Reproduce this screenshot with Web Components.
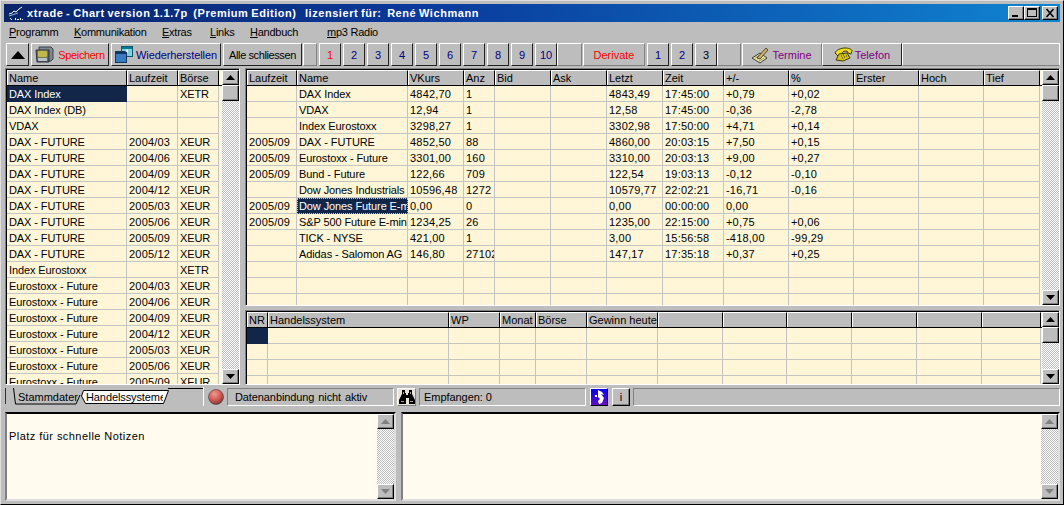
<!DOCTYPE html>
<html>
<head>
<meta charset="utf-8">
<title>xtrade</title>
<style>
  html, body { margin: 0; padding: 0; background: #bdbdbd; overflow: hidden; }
  body { font: 11px "Liberation Sans", Arial, sans-serif; color: #000; }
</style>
</head>
<body>
<xt-window>
  <xt-titlebar slot="title">xtrade - Chart version 1.1.7p  (Premium Edition)   lizensiert für:  René Wichmann</xt-titlebar>
  <xt-menubar slot="menu"></xt-menubar>
  <xt-toolbar slot="tools"></xt-toolbar>
  <xt-grid slot="left" id="stamm" cols="120,51,41"></xt-grid>
  <xt-grid slot="top" id="kurse" cols="50,111,56,31,56,56,56,61,65,65,65,65,56"></xt-grid>
  <xt-grid slot="bottom" id="systeme" cols="21,181,51,36,51,71,65,64,65,65,65,59"></xt-grid>
  <xt-statusbar slot="status"></xt-statusbar>
  <xt-notes slot="noteleft">Platz für schnelle Notizen</xt-notes>
  <xt-notes slot="noteright"></xt-notes>
</xt-window>

<script>
const raised = `
  background: #bdbdbd;
  border: 1px solid;
  border-color: #fff #000 #000 #fff;
  box-sizing: border-box;
`;

class XtWindow extends HTMLElement {
  constructor() {
    super();
    this.attachShadow({ mode: 'open' }).innerHTML = `
      <style>
        :host {
          display: flex;
          flex-direction: column;
          width: 1064px;
          height: 505px;
          box-sizing: border-box;
          padding: 3px 3px 0 3px;
          background: #bdbdbd;
          border-top: 1px solid #dfdfdf;
          border-left: 1px solid #dfdfdf;
          border-right: 1px solid #000;
          border-bottom: 1px solid #000;
        }
        .main { display: flex; gap: 5px; height: 317px; margin-top: 2px; margin-left: 1px; }
        .right { display: flex; flex-direction: column; gap: 4px; flex: 1; min-width: 0; }
        .leftcol { width: 235px; flex: none; }
        .notes { display: flex; gap: 5px; height: 89px; margin-top: 6px; margin-left: 1px; }
        .notes ::slotted([slot=noteleft]) { width: 391px; flex: none; }
        .notes ::slotted([slot=noteright]) { flex: 1; }
        ::slotted([slot=top]) { height: 238px; flex: none; }
        ::slotted([slot=bottom]) { height: 75px; flex: none; }
        ::slotted([slot=left]) { height: 317px; }
      </style>
      <slot name="title"></slot>
      <slot name="menu"></slot>
      <slot name="tools"></slot>
      <div class="main">
        <div class="leftcol"><slot name="left"></slot></div>
        <div class="right"><slot name="top"></slot><slot name="bottom"></slot></div>
      </div>
      <slot name="status"></slot>
      <div class="notes"><slot name="noteleft"></slot><slot name="noteright"></slot></div>
    `;
  }
}

class XtTitlebar extends HTMLElement {
  constructor() {
    super();
    this.attachShadow({ mode: 'open' }).innerHTML = `
      <style>
        :host {
          display: flex;
          align-items: center;
          height: 18px;
          padding: 0 2px 0 4px;
          background: linear-gradient(90deg, #0a246a 0%, #0a3a9c 40%, #1084d0 100%);
          color: #fff;
          font: bold 11px "Liberation Sans", Arial, sans-serif;
          letter-spacing: 0.55px;
          word-spacing: -0.8px;
          white-space: pre;
        }
        svg.logo { flex: none; margin-right: 3px; }
        .t { flex: 1; }
        .btns { display: flex; }
        button {
          ${raised}
          width: 16px; height: 14px; padding: 0; display: block;
          box-shadow: inset -1px -1px 0 #808080;
        }
        button svg { display: block; }
        button.close { margin-left: 2px; }
      </style>
      <svg class="logo" width="16" height="16" viewBox="0 0 16 16">
        <polyline points="1,9 4,8 6,6 8,7 11,4 14,2" fill="none" stroke="#fff" stroke-width="1"/>
        <polyline points="1,11 4,10 7,9 10,8" fill="none" stroke="#9fb4e0" stroke-width="1"/>
        <path d="M2 13h1v1h1v1H3v-1H2zM7 13h1v2H7zM9 14h2v1H9zM12 13h1v2h-1zM14 14h1v1h-1z" fill="#fff"/>
      </svg>
      <span class="t"><slot></slot></span>
      <span class="btns">
        <button><svg width="14" height="12"><rect x="3" y="8" width="6" height="2" fill="#000"/></svg></button>
        <button><svg width="14" height="12"><rect x="2.5" y="1.5" width="9" height="8" fill="none" stroke="#000"/><rect x="2" y="1" width="10" height="2" fill="#000"/></svg></button>
        <button class="close"><svg width="14" height="12"><path d="M3.5 2l7 8M10.5 2l-7 8" stroke="#000" stroke-width="1.6" fill="none"/></svg></button>
      </span>
    `;
  }
}

class XtMenubar extends HTMLElement {
  constructor() {
    super();
    const items = [['P', 'rogramm', 5, 48], ['K', 'ommunikation', 17, 71], ['E', 'xtras', 17, 33], ['L', 'inks', 15, 25], ['H', 'andbuch', 15, 48], ['m', 'p3 Radio', 29, 52]];
    this.attachShadow({ mode: 'open' }).innerHTML = `
      <style>
        :host {
          display: flex;
          align-items: center;
          height: 21px;
          box-sizing: border-box;
          padding-bottom: 1px;
          font: 11px "Liberation Sans", Arial, sans-serif;
          letter-spacing: -0.25px;
        }
        span { white-space: pre; flex: none; }
        u { text-underline-offset: 1px; }
      </style>
      ${items.map(i => `<span style="margin-left:${i[2]}px;width:${i[3]}px"><u>${i[0]}</u>${i[1]}</span>`).join('')}
    `;
  }
}

class XtButton extends HTMLElement {
  constructor() {
    super();
    this.attachShadow({ mode: 'open' }).innerHTML = `
      <style>
        :host {
          ${raised}
          display: flex;
          align-items: center;
          justify-content: center;
          gap: 3px;
          height: 23px;
          white-space: nowrap;
          flex: none;
          font: 11px "Liberation Sans", Arial, sans-serif;
          border-color: #fff #222 #222 #fff;
        }
        :host([flat]) { border-color: #fff #808080 #808080 #fff; }
      </style>
      <slot name="icon"></slot><slot></slot>
    `;
  }
}

class XtToolbar extends HTMLElement {
  constructor() {
    super();
    const nums = ['1','2','3','4','5','6','7','8','9','10'];
    this.attachShadow({ mode: 'open' }).innerHTML = `
      <style>
        :host {
          display: flex;
          gap: 2px;
          height: 23px;
          margin-left: 1px;
        }
        xt-button svg { display: block; }
      </style>
      <xt-button style="width:23px;margin-left:1px">
        <svg slot="icon" width="14" height="8"><path d="M0 8L7 0l7 8z" fill="#000"/></svg>
      </xt-button>
      <xt-button style="width:78px;color:#ff0000;gap:4px;letter-spacing:-0.35px">
        <svg slot="icon" width="19" height="17" viewBox="0 0 19 17">
          <path d="M4 1h12l2 2v10l-2 2H5z" fill="#7d8791" stroke="#3b4248"/>
          <path d="M1 4h13v12H2z" fill="#59656f" stroke="#2b3036"/>
          <rect x="3" y="5" width="9" height="6" fill="#f6ec6c" stroke="#8a8430"/>
          <path d="M4 7h7M4 9h7" stroke="#8a8430"/>
          <rect x="3" y="12" width="9" height="3" fill="#b9c1c9"/>
        </svg>Speichern</xt-button>
      <xt-button style="width:110px;color:#000080;gap:3px;letter-spacing:-0.1px">
        <svg slot="icon" width="18" height="17" viewBox="0 0 18 17">
          <rect x="6.5" y="0.5" width="11" height="10" fill="#7fd0dc" stroke="#0a5a74"/>
          <rect x="7" y="1" width="10" height="2" fill="#0a7a94"/>
          <rect x="0.5" y="5.5" width="11" height="11" fill="#3a7cc4" stroke="#12365e"/>
          <rect x="1" y="6" width="10" height="2" fill="#12365e"/>
          <path d="M10 5l3-2v4z" fill="#eee"/>
        </svg>Wiederherstellen</xt-button>
      <xt-button style="width:79px;letter-spacing:-0.4px">Alle schliessen</xt-button>
      <xt-button flat style="width:14px;margin-left:-1px"></xt-button>
      ${nums.map((n, i) => `<xt-button style="width:22px;color:${i ? '#000080' : '#ff0000'}">${n}</xt-button>`).join('')}
      <xt-button flat style="width:25px;margin-left:-2px"></xt-button>
      <xt-button style="width:62px;margin-left:-1px;color:#ff0000;border-color:#fff #808080 #808080 #fff">Derivate</xt-button>
      <xt-button style="width:22px;color:#000080">1</xt-button>
      <xt-button style="width:22px;color:#000080">2</xt-button>
      <xt-button style="width:22px">3</xt-button>
      <xt-button flat style="width:24px;margin-left:-2px"></xt-button>
      <xt-button flat style="width:80px;margin-left:-1px;color:#800080;gap:3px">
        <svg slot="icon" width="17" height="18" viewBox="0 0 17 18">
          <path d="M0 12l8-5 7 5-7 5z" fill="#eee6b0" stroke="#3a3a30"/>
          <path d="M3 12l5-3M5 13l5-3M7 15l5-3" stroke="#8a8a60"/>
          <path d="M5 12L14 2l2 2-8 9z" fill="#c8b070" stroke="#5a4a2a"/>
        </svg>Termine</xt-button>
      <xt-button style="width:80px;margin-left:-2px;color:#800080;gap:2px">
        <svg slot="icon" width="19" height="15" viewBox="0 0 19 15">
          <path d="M1 6c1-3 6-5 10-5 3 0 7 1 7 3l-1 3-3-1-1-2c-2 0-4 0-5 2l1 1-4 3z" fill="#f2e020" stroke="#3f3a00"/>
          <path d="M2 13l3-6 8-1 3 5-7 3z" fill="#d8c410" stroke="#3f3a00"/>
          <path d="M7 9h1M9 8h1M8 11h1M10 10h1M12 9h1" stroke="#222"/>
        </svg>Telefon</xt-button>
      <xt-button flat style="flex:1;margin-left:-2px;border-right-color:#fff"></xt-button>
    `;
  }
}

class XtScroll extends HTMLElement {
  constructor() {
    super();
    this.attachShadow({ mode: 'open' }).innerHTML = `
      <style>
        :host {
          display: flex;
          flex-direction: column;
          width: 17px;
          flex: none;
          background: repeating-conic-gradient(#bdbdbd 0 25%, #fff 0 50%) 0 0 / 2px 2px;
          --arrow: #000;
        }
        :host([off]) { --arrow: #808080; }
        .b {
          ${raised}
          height: 15px;
          flex: none;
          display: flex;
          align-items: center;
          justify-content: center;
          box-shadow: inset -1px -1px 0 #808080;
        }
        .thumb { height: 16px; }
        .sp { flex: 1; }
        svg { display: block; fill: var(--arrow); }
      </style>
      <div class="b"><svg width="9" height="5"><path d="M0 5L4.5 0 9 5z"/></svg></div>
      <div class="b thumb"></div>
      <div class="sp"></div>
      <div class="b"><svg width="9" height="5"><path d="M0 0l4.5 5L9 0z"/></svg></div>
    `;
    this.thumb = this.shadowRoot.querySelector('.thumb');
  }
  connectedCallback() {
    if (this.hasAttribute('off') && this.thumb) this.thumb.remove();
  }
}

class XtGrid extends HTMLElement {
  constructor() {
    super();
    this.attachShadow({ mode: 'open' }).innerHTML = `
      <style>
        :host {
          display: flex;
          box-sizing: border-box;
          padding: 1px;
          border: 1px solid;
          border-color: #808080 #fff #fff #808080;
          font: 11px "Liberation Sans", Arial, sans-serif;
          letter-spacing: -0.1px;
          background: #000;
          overflow: hidden;
        }
        .inner { display: flex; flex: 1; min-width: 0; background: #fff6d8; overflow: hidden; margin: 0 -1px -1px 0; }
        .table { flex: 1; min-width: 0; overflow: hidden; }
        .row { display: grid; height: 16px; }
        .cell {
          box-sizing: border-box;
          height: 16px;
          line-height: 17px;
          padding-left: 2px;
          border-right: 1px solid #c4c4c4;
          border-bottom: 1px solid #c4c4c4;
          white-space: pre;
          overflow: hidden;
        }
        .cell.num { letter-spacing: 0.2px; }
        .head { height: 15px; border-bottom: 1px solid #000; box-sizing: content-box; }
        .head .cell {
          background: #bdbdbd;
          height: 15px;
          line-height: 14px;
          border-color: #000;
          border-bottom: 0;
          border-top: 1px solid #fff;
          border-left: 1px solid #fff;
          padding-left: 1px;
          letter-spacing: 0;
        }
        .cell.sel { background: #12264a; color: #fff; border-color: #12264a; }
        .cell.focus { outline: 1px dotted #d8c890; outline-offset: -1px; }
      </style>
      <div class="inner"><div class="table"></div><xt-scroll></xt-scroll></div>
    `;
  }
  set data({ head, rows, sel, focus }) {
    const cols = this.getAttribute('cols').split(',').map(c => c + 'px').join(' ');
    const mk = (r, y) => `<div class="row" style="grid-template-columns:${cols}">` + r.map((c, x) => {
      const on = sel && sel[0] === y && sel[1] === x;
      const num = /^[\d+\-]/.test(c) ? ' num' : '';
      return `<div class="cell${num}${on ? ' sel' : ''}${on && focus ? ' focus' : ''}">${c}</div>`;
    }).join('') + '</div>';
    this.shadowRoot.querySelector('.table').innerHTML =
      mk(head, -1).replace('class="row"', 'class="row head"') + rows.map(mk).join('');
  }
}

class XtStatusbar extends HTMLElement {
  constructor() {
    super();
    this.attachShadow({ mode: 'open' }).innerHTML = `
      <style>
        :host {
          display: flex;
          align-items: stretch;
          height: 19px;
          margin-top: 2px;
          margin-left: 1px;
          font: 11px "Liberation Sans", Arial, sans-serif;
        }
        .tabs { position: relative; width: 198px; height: 19px; flex: none; border-right: 1px solid #fff; }
        .tabs svg { display: block; }
        .tabs span { position: absolute; top: 3px; line-height: 15px; white-space: pre; overflow: hidden; }
        .ball { width: 16px; flex: none; margin-left: 4px; display: flex; align-items: center; justify-content: center; }
        .panel {
          box-sizing: border-box;
          border: 1px solid;
          border-color: #808080 #fff #fff #808080;
          padding-left: 7px;
          line-height: 16px;
          margin-top: 1px;
          flex: none;
          white-space: pre;
        }
        .sq { box-sizing: border-box; width: 18px; flex: none; display: flex; align-items: center; justify-content: center; border: 1px solid; margin-top: 1px; }
      </style>
      <div class="tabs">
        <svg width="198" height="19">
          <path d="M0.5 1V17" stroke="#333" fill="none"/>
          <path d="M8.5 1L10.5 17H71L75 8" stroke="#000" fill="none"/>
          <path d="M78.5 3.5H163.5L158.5 16.5H80.5L76.5 9z" fill="#fdfdfd" stroke="#000"/>
          <path d="M163 1.5H198" stroke="#000" fill="none"/>
        </svg>
        <span style="left:13px;width:60px">Stammdater</span>
        <span style="left:81px;width:77px;letter-spacing:-.1px">Handelssysteme</span>
      </div>
      <div class="ball">
        <svg width="16" height="16" viewBox="0 0 16 16">
          <defs><radialGradient id="b" cx=".4" cy=".3" r=".8"><stop offset="0" stop-color="#f09a90"/><stop offset=".55" stop-color="#d0544e"/><stop offset="1" stop-color="#5a3030"/></radialGradient></defs>
          <circle cx="8" cy="8" r="7.5" fill="url(#b)" stroke="#4a4040" stroke-width=".6"/>
        </svg>
      </div>
      <div class="panel" style="width:167px;margin-left:3px;letter-spacing:-.1px;word-spacing:1px">Datenanbindung nicht aktiv</div>
      <div class="sq" style="width:19px;margin-left:3px;background:#e8e4dc;border-color:#fff #808080 #808080 #fff">
        <svg width="16" height="15" viewBox="0 0 16 15">
          <path d="M3 0h3v3h1v2h2V3h1V0h3v4l3 6v4h-6V8H7v6H0v-4l3-6z" fill="#000"/>
          <path d="M2 11h3v1H2zM11 11h3v1h-3zM4 2h1v2H4zM11 2h1v2h-1z" fill="#a8a49c"/>
        </svg>
      </div>
      <div class="panel" style="width:167px;margin-left:3px;padding-left:4px;letter-spacing:-.05px">Empfangen: 0</div>
      <div class="sq" style="margin-left:4px;background:linear-gradient(170deg,#0000f0,#6a10c0);border-color:#fff #000 #000 #fff">
        <svg width="16" height="16" viewBox="0 0 16 16">
          <path d="M7 1l4 2 2 3-3-1 3 4-2 5-3 1-1-3 2-2-2-2z" fill="#fff"/>
          <path d="M4 6h2v2H4z" fill="#fff"/>
        </svg>
      </div>
      <div class="sq" style="${raised};margin-top:1px;margin-left:4px;box-shadow:inset -1px -1px 0 #808080;line-height:15px">i</div>
      <div class="panel" style="flex:1;margin-left:3px"></div>
    `;
  }
}

class XtNotes extends HTMLElement {
  constructor() {
    super();
    this.attachShadow({ mode: 'open' }).innerHTML = `
      <style>
        :host {
          display: flex;
          box-sizing: border-box;
          border: 2px solid;
          border-color: #000 #dfdfdf #dfdfdf #808080;
          background: #fffbef;
          font: 11px "Liberation Sans", Arial, sans-serif;
          letter-spacing: 0.45px;
          min-width: 0;
        }
        .txt { flex: 1; padding: 15px 0 0 2px; line-height: 15px; }
      </style>
      <div class="txt"><slot></slot></div>
      <xt-scroll off></xt-scroll>
    `;
  }
}

customElements.define('xt-window', XtWindow);
customElements.define('xt-titlebar', XtTitlebar);
customElements.define('xt-menubar', XtMenubar);
customElements.define('xt-button', XtButton);
customElements.define('xt-toolbar', XtToolbar);
customElements.define('xt-scroll', XtScroll);
customElements.define('xt-grid', XtGrid);
customElements.define('xt-statusbar', XtStatusbar);
customElements.define('xt-notes', XtNotes);

// grid contents
const F = 'DAX - FUTURE', E = 'Eurostoxx - Future';
document.getElementById('stamm').data = {
  head: ['Name', 'Laufzeit', 'Börse'],
  sel: [0, 0],
  rows: [
    ['DAX Index', '', 'XETR'], ['DAX Index (DB)', '', ''], ['VDAX', '', ''],
    [F, '2004/03', 'XEUR'], [F, '2004/06', 'XEUR'], [F, '2004/09', 'XEUR'], [F, '2004/12', 'XEUR'],
    [F, '2005/03', 'XEUR'], [F, '2005/06', 'XEUR'], [F, '2005/09', 'XEUR'], [F, '2005/12', 'XEUR'],
    ['Index Eurostoxx', '', 'XETR'],
    [E, '2004/03', 'XEUR'], [E, '2004/06', 'XEUR'], [E, '2004/09', 'XEUR'], [E, '2004/12', 'XEUR'],
    [E, '2005/03', 'XEUR'], [E, '2005/06', 'XEUR'], [E, '2005/09', 'XEUR']
  ]
};
const row = (l, n, v, a, le, z, d, p) => [l, n, v, a, '', '', le, z, d, p, '', '', ''];
const blank = n => Array(n).fill('');
document.getElementById('kurse').data = {
  head: ['Laufzeit', 'Name', 'VKurs', 'Anz', 'Bid', 'Ask', 'Letzt', 'Zeit', '+/-', '%', 'Erster', 'Hoch', 'Tief'],
  sel: [7, 1],
  focus: true,
  rows: [
    row('', 'DAX Index', '4842,70', '1', '4843,49', '17:45:00', '+0,79', '+0,02'),
    row('', 'VDAX', '12,94', '1', '12,58', '17:45:00', '-0,36', '-2,78'),
    row('', 'Index Eurostoxx', '3298,27', '1', '3302,98', '17:50:00', '+4,71', '+0,14'),
    row('2005/09', 'DAX - FUTURE', '4852,50', '88', '4860,00', '20:03:15', '+7,50', '+0,15'),
    row('2005/09', 'Eurostoxx - Future', '3301,00', '160', '3310,00', '20:03:13', '+9,00', '+0,27'),
    row('2005/09', 'Bund - Future', '122,66', '709', '122,54', '19:03:13', '-0,12', '-0,10'),
    row('', 'Dow Jones Industrials', '10596,48', '1272', '10579,77', '22:02:21', '-16,71', '-0,16'),
    row('2005/09', 'Dow Jones Future E-m', '0,00', '0', '0,00', '00:00:00', '0,00', ''),
    row('2005/09', 'S&amp;P 500 Future E-mini', '1234,25', '26', '1235,00', '22:15:00', '+0,75', '+0,06'),
    row('', 'TICK - NYSE', '421,00', '1', '3,00', '15:56:58', '-418,00', '-99,29'),
    row('', 'Adidas - Salomon AG', '146,80', '27102', '147,17', '17:35:18', '+0,37', '+0,25'),
    blank(13), blank(13), blank(13)
  ]
};
document.getElementById('systeme').data = {
  head: ['NR', 'Handelssystem', 'WP', 'Monat', 'Börse', 'Gewinn heute', '', '', '', '', '', ''],
  sel: [0, 0],
  rows: [blank(12), blank(12), blank(12), blank(12)]
};
</script>
</body>
</html>
